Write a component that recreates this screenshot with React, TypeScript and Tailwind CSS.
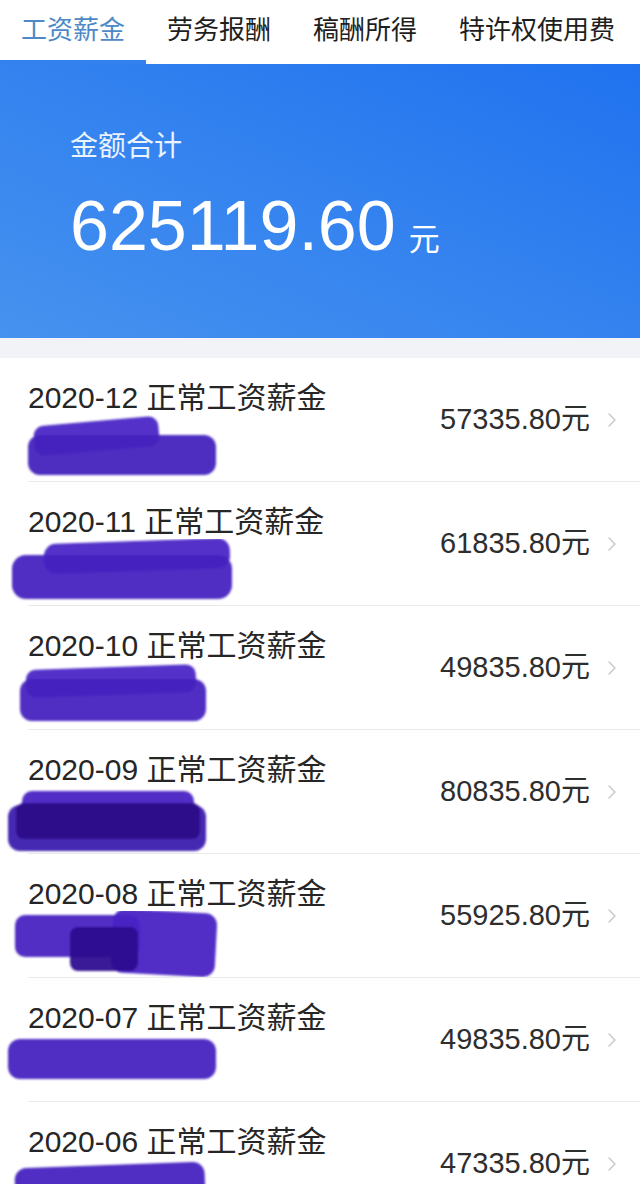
import { ChevronRight } from "lucide-react";

const tabs = ["工资薪金", "劳务报酬", "稿酬所得", "特许权使用费"];

type Stroke = [number, number, number, number, number, number, string];

// redaction marker strokes: x, y, w, h, rx, rotate, colour
const rows: { month: string; amount: string; blob: Stroke[] }[] = [
  {
    month: "2020-12",
    amount: "57335.80",
    blob: [
      [34, 6, 125, 30, 10, -5, "#4b26c6"],
      [28, 20, 188, 40, 12, 0, "#4422bd"],
    ],
  },
  {
    month: "2020-11",
    amount: "61835.80",
    blob: [
      [44, 2, 186, 30, 12, -2, "#4b26c6"],
      [12, 16, 220, 44, 14, 0, "#4622c0"],
    ],
  },
  {
    month: "2020-10",
    amount: "49835.80",
    blob: [
      [26, 4, 170, 28, 10, -2, "#4b26c6"],
      [20, 16, 186, 42, 12, 0, "#4622c0"],
    ],
  },
  {
    month: "2020-09",
    amount: "80835.80",
    blob: [
      [22, 4, 172, 30, 10, 0, "#4a25c4"],
      [8, 18, 198, 46, 12, 0, "#3d1cae"],
      [16, 16, 184, 36, 8, 0, "#2c1089"],
    ],
  },
  {
    month: "2020-08",
    amount: "55925.80",
    blob: [
      [15, 4, 125, 42, 10, 0, "#4824c2"],
      [112, 0, 104, 64, 12, 3, "#4a25c4"],
      [70, 16, 68, 44, 8, 0, "#2e1190"],
    ],
  },
  {
    month: "2020-07",
    amount: "49835.80",
    blob: [[8, 4, 208, 40, 12, 0, "#4622c0"]],
  },
  {
    month: "2020-06",
    amount: "47335.80",
    blob: [[15, 6, 190, 40, 12, -2, "#4622c0"]],
  },
];

function Redaction({ strokes }: { strokes: Stroke[] }) {
  return (
    <svg width="240" height="66" viewBox="0 0 240 66" className="block">
      <defs>
        <filter id="soft">
          <feGaussianBlur stdDeviation="1" />
        </filter>
      </defs>
      <g filter="url(#soft)">
        {strokes.map(([x, y, w, h, rx, r, c], i) => (
          <rect
            key={i}
            x={x}
            y={y}
            width={w}
            height={h}
            rx={rx}
            fill={c}
            opacity={0.95}
            transform={`rotate(${r} ${x + w / 2} ${y + h / 2})`}
          />
        ))}
      </g>
    </svg>
  );
}

export default function App() {
  return (
    <div
      className="h-[1184px] w-[640px] overflow-hidden bg-white"
      style={{ fontFamily: '"Liberation Sans", "Noto Sans CJK SC", sans-serif' }}
    >
      {/* tabs */}
      <div className="flex h-[60px] items-center bg-white">
        {tabs.map((t, i) => (
          <div
            key={t}
            className={
              i === 0
                ? "flex h-full w-[146px] items-center justify-center text-[26px] text-[#4d89c6]"
                : "flex h-full items-center px-[21px] text-[26px] text-[#1e1e1e]"
            }
          >
            {t}
          </div>
        ))}
      </div>
      <div className="flex h-[4px]">
        <div className="w-[146px] bg-[#3381ee]" />
        <div className="flex-1 bg-white" />
      </div>

      {/* total banner */}
      <div className="h-[274px] bg-linear-to-tr from-[#4692ef] to-[#2072ef] pl-[70px] pt-[66px] text-white">
        <div className="text-[28px] leading-[34px] text-white/90">金额合计</div>
        <div className="mt-[26px] flex items-baseline">
          <span className="text-[70px] leading-[72px]">625119.60</span>
          <span className="ml-[13px] text-[31px]">元</span>
        </div>
      </div>

      <div className="h-[20px] bg-[#f1f3f7]" />

      {/* list */}
      <div className="bg-white">
        {rows.map((r) => (
          <div key={r.month} className="relative flex h-[124px] items-center justify-between">
            <div className="flex h-full flex-col pt-[22px]">
              <div className="pl-[28px] text-[30px] leading-[35px] text-[#262626]">
                {r.month} 正常工资薪金
              </div>
              <Redaction strokes={r.blob} />
            </div>
            <div className="flex items-center pr-[16px]">
              <span className="text-[29px] text-[#2e2e2e]">
                {r.amount}元
              </span>
              <ChevronRight size={24} strokeWidth={1.5} className="ml-[10px] text-[#c9c9ce]" />
            </div>
            <div className="absolute bottom-0 left-[28px] right-0 h-px bg-[#e9e9ec]" />
          </div>
        ))}
      </div>
    </div>
  );
}
